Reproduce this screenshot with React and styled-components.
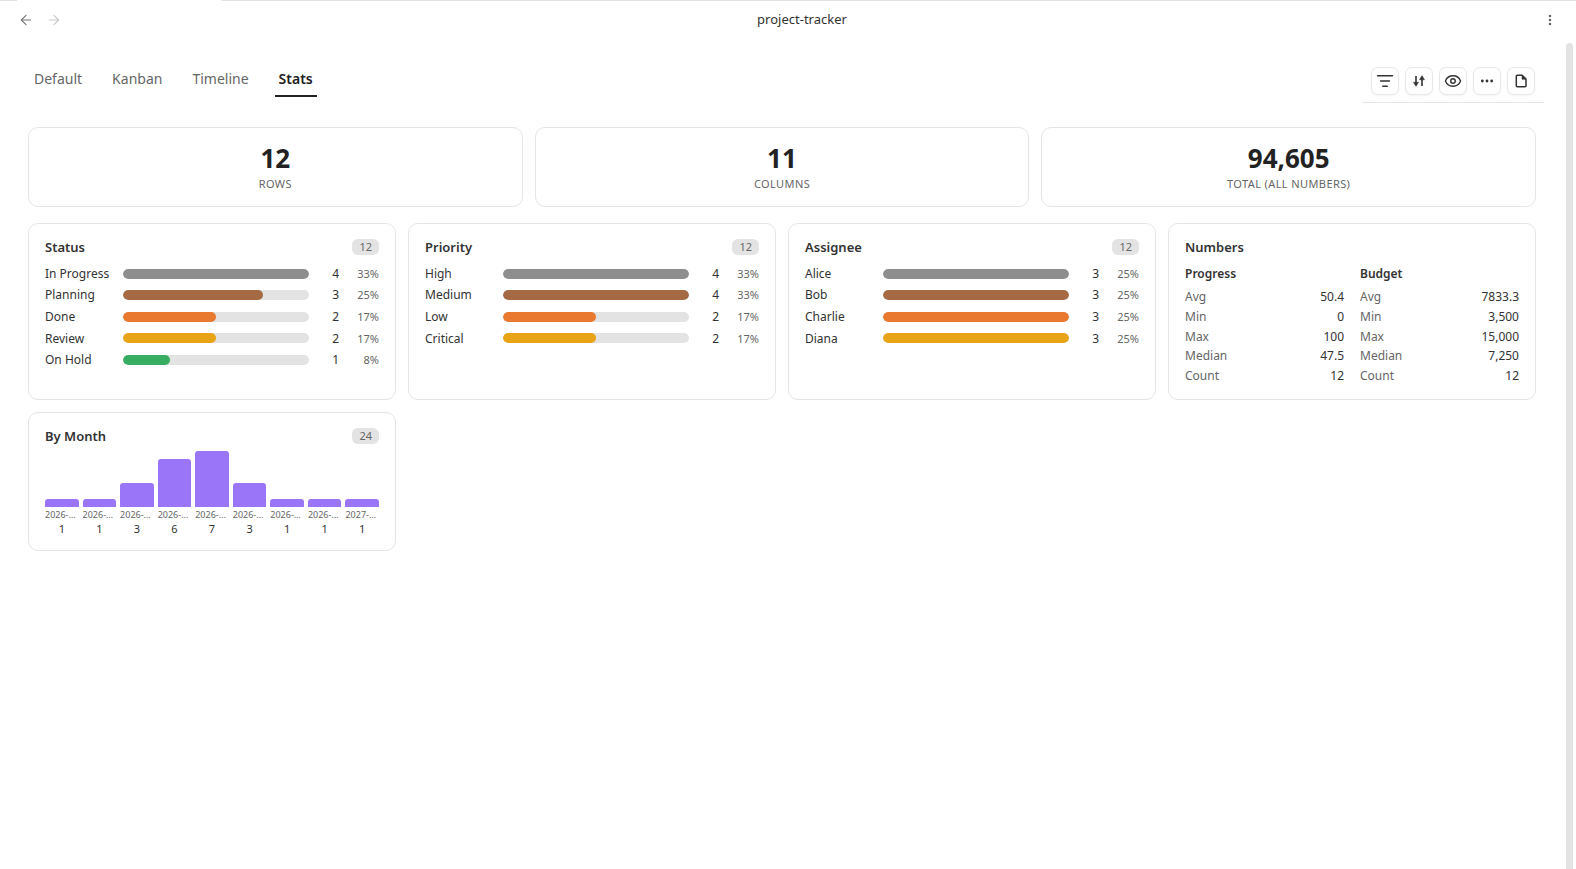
import React from 'react';
import styled, { createGlobalStyle } from 'styled-components';
import { ArrowLeft, ArrowRight, EllipsisVertical, Ellipsis, Eye, ListFilter } from 'lucide-react';

const Global = createGlobalStyle`
  html, body { margin: 0; height: 100%; background: #fff; }
  body { font-family: "Noto Sans", sans-serif; color: #222; overflow: hidden; }
  * { box-sizing: border-box; }
`;
const Page = styled.div`position: relative; width: 1576px; height: 869px; background: #fff; overflow: hidden;`;
const TopEdge = styled.div`display: flex; height: 1px; background: #e2e2e2;`;
const TopGap = styled.div`width: 204px; margin-left: 17px; background: #fff;`;
const TitleBar = styled.header`display: flex; align-items: center; height: 38px; padding: 0 18px;`;
const NavButtons = styled.div`display: flex; gap: 12px; width: 44px;`;
const NavIcon = styled.span`display: flex; color: ${p => p.$off ? '#c8c8c8' : '#777'};`;
const Title = styled.div`flex: 1; text-align: center; font-size: 13px; line-height: 18px; color: #333; padding-right: 1px; margin-top: -2px;`;
const Kebab = styled.span`display: flex; color: #666; margin-right: 1px;`;
const TabBar = styled.div`display: flex; align-items: flex-start; justify-content: space-between; padding: 22px 32px 0 30px; height: 88px;`;
const Tabs = styled.nav`display: flex; gap: 22px;`;
const Tab = styled.div`
  padding: 8px 4px 6px; font-size: 14px; line-height: 20px; font-weight: ${p => p.$active ? 600 : 400};
  color: ${p => p.$active ? '#222' : '#666'};
  border-bottom: 2px solid ${p => p.$active ? '#222' : 'transparent'};
`;
const Tools = styled.div`display: flex; gap: 6px; padding: 6px 9px 7px; border-bottom: 1px solid #e5e5e5;`;
const ToolButton = styled.button`
  width: 28px; height: 28px; padding: 0; display: flex; align-items: center; justify-content: center;
  background: #fff; border: 1px solid #e8e8e8; border-radius: 7px; color: #333;
  box-shadow: 0 1px 2px rgba(0,0,0,.05);
`;
const Content = styled.main`display: flex; flex-direction: column; padding: 0 40px 0 28px;`;
const StatRow = styled.section`display: grid; grid-template-columns: repeat(3, 1fr); gap: 12px; margin-bottom: 16px;`;
const StatCard = styled.div`
  height: 80px; border: 1px solid #e5e5e5; border-radius: 10px; display: flex; flex-direction: column; align-items: center;
  padding-top: 13px;
`;
const StatValue = styled.div`font-size: 26px; line-height: 34px; font-weight: 700; color: #222;`;
const StatLabel = styled.div`font-size: 11px; line-height: 16px; margin-top: 1px; color: #666; letter-spacing: .4px;`;
const Grid = styled.section`display: grid; grid-template-columns: repeat(4, 1fr); gap: 12px;`;
const Card = styled.div`
  border: 1px solid #e5e5e5; border-radius: 10px; padding: 16px; height: ${p => p.$h}px; display: flex; flex-direction: column;
`;
const CardHead = styled.div`display: flex; justify-content: space-between; align-items: center; height: 16px; margin: -1px 0 7.5px;`;
const CardTitle = styled.div`font-size: 13px; font-weight: 600; color: #333;`;
const Badge = styled.span`font-size: 11px; line-height: 16px; height: 16px; padding: 0 7px; border-radius: 6px; background: #e3e3e3; color: #666;`;
const BarRow = styled.div`display: flex; align-items: center; height: 21.6px; font-size: 12px;`;
const BarLabel = styled.span`width: 78px; color: #333; white-space: nowrap;`;
const Track = styled.div`flex: 1; height: 10px; margin-top: .5px; border-radius: 5px; background: #e3e3e3; overflow: hidden;`;
const Fill = styled.div`height: 100%; border-radius: 5px; background: ${p => p.$color};`;
const BarCount = styled.span`width: 30px; text-align: right; color: #333;`;
const BarPct = styled.span`width: 40px; text-align: right; font-size: 11px; color: #666;`;
const NumGrid = styled.div`display: grid; grid-template-columns: 1fr 1fr; gap: 16px; margin-top: 1.5px;`;
const NumHead = styled.div`font-size: 12px; font-weight: 600; color: #333; line-height: 20px; margin-bottom: 3px;`;
const NumRow = styled.div`display: flex; justify-content: space-between; font-size: 12px; line-height: 19.8px;`;
const NumKey = styled.span`color: #666;`;
const NumVal = styled.span`color: #333;`;
const Columns = styled.div`display: grid; grid-template-columns: repeat(9, 1fr); gap: 4px; margin-top: -0.5px;`;
const Col = styled.div`display: flex; flex-direction: column; min-width: 0;`;
const Plot = styled.div`height: 56px; display: flex; align-items: flex-end;`;
const ColBar = styled.div`width: 100%; background: #9b75f8; border-radius: 3px 3px 0 0;`;
const ColLabel = styled.div`font-size: 9px; line-height: 12px; margin-top: 2px; color: #666; white-space: nowrap; overflow: hidden; text-overflow: ellipsis; text-align: center;`;
const ColValue = styled.div`font-size: 11px; line-height: 14px; margin-top: 1px; text-align: center; color: #333;`;
const Scroll = styled.div`position: absolute; top: 43px; right: 3px; width: 7px; bottom: 0; background: #e3e3e3; border-radius: 4px 4px 0 0;`;

const SortIcon = () => (
  <svg width="14" height="14" viewBox="0 0 14 14" fill="currentColor" stroke="currentColor">
    <path d="M4 2v9" strokeWidth="1.6" fill="none" />
    <path d="M1.4 8.2h5.2L4 12.4Z" strokeWidth=".4" />
    <path d="M10 12V3" strokeWidth="1.6" fill="none" />
    <path d="M7.4 5.8h5.2L10 1.6Z" strokeWidth=".4" />
  </svg>
);
const PageIcon = () => (
  <svg width="14" height="14" viewBox="0 0 14 14" fill="none" stroke="currentColor">
    <path d="M3.3 1.3H8.2L12 5.1V11.7a1 1 0 0 1-1 1H3.3a1 1 0 0 1-1-1V2.3a1 1 0 0 1 1-1Z" strokeWidth="1.5" strokeLinejoin="round" />
    <path d="M8 1.5V5.3H12Z" fill="currentColor" strokeWidth=".5" />
  </svg>
);

const C = { gray: '#8e8e8e', brown: '#a56a44', orange: '#e8792f', amber: '#e8a317', green: '#38ac60' };
const groups = [
  { title: 'Status', rows: [['In Progress', 4, '33%', C.gray, 100], ['Planning', 3, '25%', C.brown, 75], ['Done', 2, '17%', C.orange, 50], ['Review', 2, '17%', C.amber, 50], ['On Hold', 1, '8%', C.green, 25]] },
  { title: 'Priority', rows: [['High', 4, '33%', C.gray, 100], ['Medium', 4, '33%', C.brown, 100], ['Low', 2, '17%', C.orange, 50], ['Critical', 2, '17%', C.amber, 50]] },
  { title: 'Assignee', rows: [['Alice', 3, '25%', C.gray, 100], ['Bob', 3, '25%', C.brown, 100], ['Charlie', 3, '25%', C.orange, 100], ['Diana', 3, '25%', C.amber, 100]] },
];
const nums = [
  { h: 'Progress', v: ['50.4', '0', '100', '47.5', '12'] },
  { h: 'Budget', v: ['7833.3', '3,500', '15,000', '7,250', '12'] },
];
const keys = ['Avg', 'Min', 'Max', 'Median', 'Count'];
const months = [['2026-01', 1], ['2026-02', 1], ['2026-03', 3], ['2026-04', 6], ['2026-05', 7], ['2026-06', 3], ['2026-07', 1], ['2026-08', 1], ['2027-01', 1]];
const tabs = ['Default', 'Kanban', 'Timeline', 'Stats'];

export default function App() {
  return (
    <Page>
      <Global />
      <TopEdge><TopGap /></TopEdge>
      <TitleBar>
        <NavButtons>
          <NavIcon><ArrowLeft size={16} strokeWidth={1.75} /></NavIcon>
          <NavIcon $off><ArrowRight size={16} strokeWidth={1.75} /></NavIcon>
        </NavButtons>
        <Title>project-tracker</Title>
        <Kebab><EllipsisVertical size={14} strokeWidth={2.4} /></Kebab>
      </TitleBar>
      <TabBar>
        <Tabs>{tabs.map(t => <Tab key={t} $active={t === 'Stats'}>{t}</Tab>)}</Tabs>
        <Tools>
          <ToolButton><ListFilter size={18} strokeWidth={1.8} /></ToolButton>
          <ToolButton><SortIcon /></ToolButton>
          <ToolButton><Eye size={18} strokeWidth={1.9} /></ToolButton>
          <ToolButton><Ellipsis size={16} strokeWidth={2.2} /></ToolButton>
          <ToolButton><PageIcon /></ToolButton>
        </Tools>
      </TabBar>
      <Content>
        <StatRow>
          <StatCard><StatValue>12</StatValue><StatLabel>ROWS</StatLabel></StatCard>
          <StatCard><StatValue>11</StatValue><StatLabel>COLUMNS</StatLabel></StatCard>
          <StatCard><StatValue>94,605</StatValue><StatLabel>TOTAL (ALL NUMBERS)</StatLabel></StatCard>
        </StatRow>
        <Grid>
          {groups.map(g => (
            <Card key={g.title} $h={177}>
              <CardHead><CardTitle>{g.title}</CardTitle><Badge>12</Badge></CardHead>
              {g.rows.map(r => (
                <BarRow key={r[0]}>
                  <BarLabel>{r[0]}</BarLabel>
                  <Track><Fill $color={r[3]} style={{ width: `${r[4]}%` }} /></Track>
                  <BarCount>{r[1]}</BarCount>
                  <BarPct>{r[2]}</BarPct>
                </BarRow>
              ))}
            </Card>
          ))}
          <Card $h={177}>
            <CardHead><CardTitle>Numbers</CardTitle></CardHead>
            <NumGrid>
              {nums.map(n => (
                <div key={n.h}>
                  <NumHead>{n.h}</NumHead>
                  {keys.map((k, i) => <NumRow key={k}><NumKey>{k}</NumKey><NumVal>{n.v[i]}</NumVal></NumRow>)}
                </div>
              ))}
            </NumGrid>
          </Card>
          <Card $h={139}>
            <CardHead><CardTitle>By Month</CardTitle><Badge>24</Badge></CardHead>
            <Columns>
              {months.map(([m, v]) => (
                <Col key={m}>
                  <Plot><ColBar style={{ height: v * 8 }} /></Plot>
                  <ColLabel>{m}</ColLabel>
                  <ColValue>{v}</ColValue>
                </Col>
              ))}
            </Columns>
          </Card>
        </Grid>
      </Content>
      <Scroll />
    </Page>
  );
}
